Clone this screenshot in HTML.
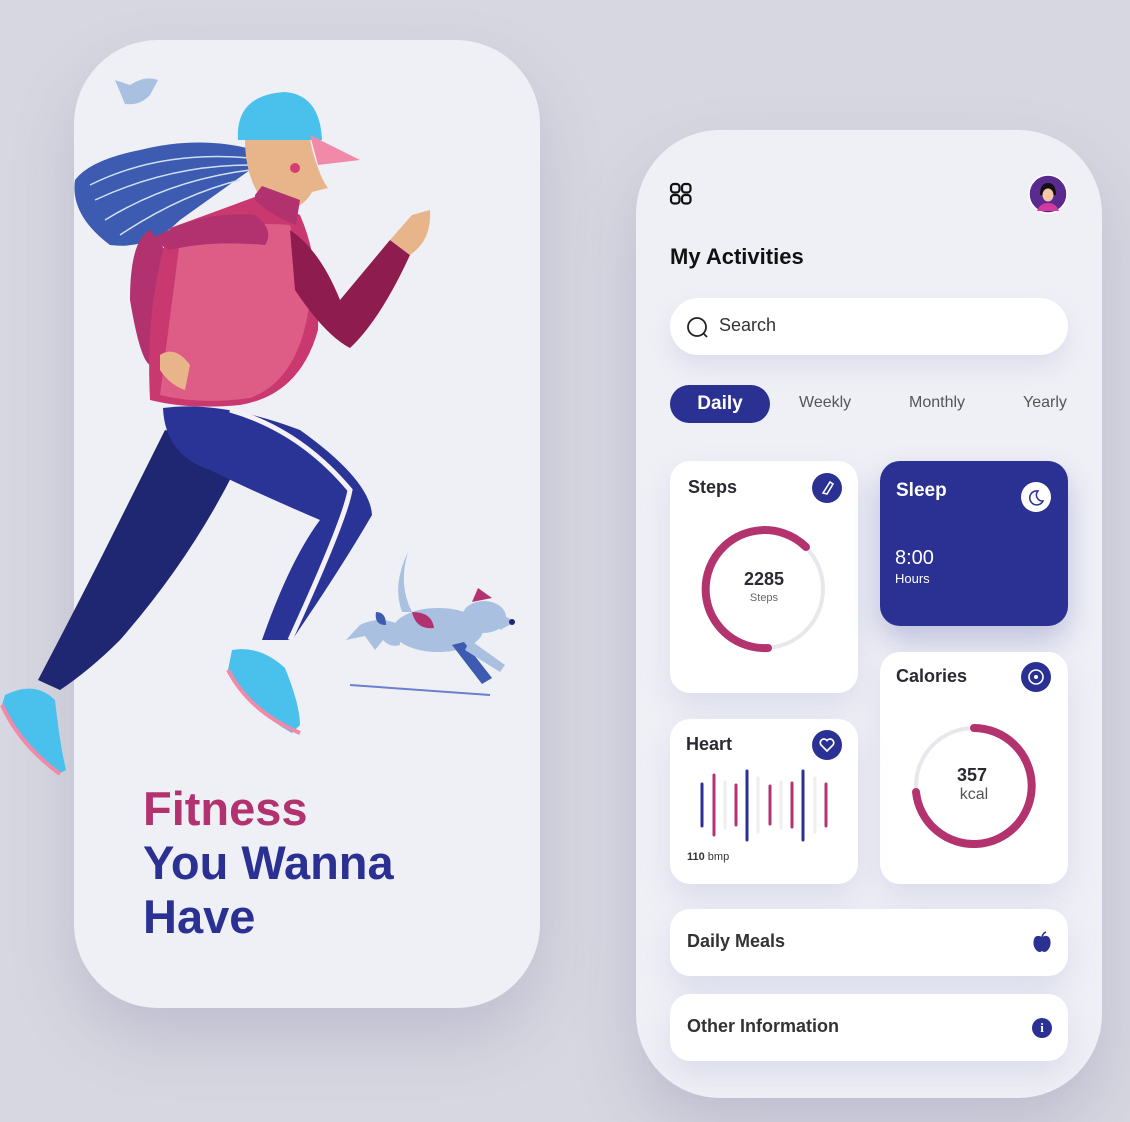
<!DOCTYPE html>
<html><head><meta charset="utf-8"><style>
*{margin:0;padding:0;box-sizing:border-box}
body{width:1130px;height:1122px;background:#d7d7e1;font-family:"Liberation Sans",sans-serif;position:relative;overflow:hidden}
.phone{position:absolute;width:466px;height:968px;border-radius:84px;background:#eff0f6;box-shadow:0 30px 60px rgba(120,120,160,.25)}
.abs{position:absolute}
.card{position:absolute;background:#fff;border-radius:20px;box-shadow:0 14px 30px rgba(150,150,200,.22)}
.t{font-weight:bold;color:#2a2a33}
.ic{position:absolute;width:30px;height:30px;border-radius:50%;background:#2a3192}
.big{position:absolute;left:143px;font-size:47px;font-weight:bold;line-height:54px}
</style></head><body>
<div class="phone" style="left:74px;top:40px"></div>
<div class="phone" style="left:636px;top:130px"></div>

<svg class="abs" style="left:0;top:0" width="560" height="800" viewBox="0 0 560 800">
<!-- bird -->
<path d="M115 80 L130 85 Q145 75 158 80 L150 95 Q140 106 125 104 L120 92 Z" fill="#a9c0e0"/>
<!-- hair -->
<path d="M255 150 Q200 135 140 150 Q90 160 75 180 Q70 215 110 245 Q150 250 180 220 Q215 195 250 170 Z" fill="#3d5bb0"/>
<path d="M90 185 Q160 150 250 158 M95 200 Q170 165 250 165 M105 220 Q170 180 250 170 M120 235 Q180 195 240 180" stroke="#cfe0f7" stroke-width="1.5" fill="none"/>
<!-- face -->
<path d="M245 140 L310 140 Q318 175 328 188 L312 192 Q305 205 290 210 L262 200 Q245 175 245 140Z" fill="#e8b58a"/>
<circle cx="295" cy="168" r="5" fill="#d83c73"/>
<!-- cap -->
<path d="M238 140 Q235 95 285 92 Q320 95 322 140 Z" fill="#4ac0ec"/>
<path d="M310 135 L360 160 L318 165 Z" fill="#f08aa8"/>
<!-- back arm -->
<path d="M150 230 Q130 240 130 300 Q140 360 150 365 L190 370 L185 330 L168 315 L165 250 Z" fill="#b1326f"/>
<!-- torso -->
<path d="M170 228 Q220 210 260 195 L300 215 Q320 260 318 330 Q300 395 240 405 Q190 410 150 400 Q145 300 170 228Z" fill="#c9396f"/>
<path d="M180 240 Q230 220 290 225 L310 300 Q300 380 250 398 Q200 405 160 395 Z" fill="#ee7b99" opacity=".55"/>
<path d="M255 195 L262 186 L300 200 L296 225 Q270 215 255 200Z" fill="#b1326f"/>
<!-- front arm -->
<path d="M290 230 Q320 250 340 300 L390 240 L410 255 Q380 320 350 348 Q325 335 295 290 Z" fill="#8e1c4e"/>
<path d="M390 240 L412 215 L430 210 Q432 240 410 255Z" fill="#e8b58a"/>
<path d="M150 240 Q200 210 255 215 Q275 230 265 245 Q210 240 170 250 Z" fill="#b1326f"/>
<path d="M160 355 Q175 345 190 365 L185 390 Q170 385 160 370Z" fill="#e8b58a"/>
<!-- back leg -->
<path d="M165 430 Q210 440 235 470 Q190 560 120 640 Q90 670 60 690 L38 680 Q80 600 110 540 Q140 480 165 430Z" fill="#1f2672"/>
<!-- front leg -->
<path d="M163 408 Q220 400 300 430 Q370 480 372 515 Q340 570 292 640 L262 640 Q290 560 320 520 Q250 490 210 470 Q165 455 163 408Z" fill="#2a3497"/>
<path d="M230 410 Q300 430 350 490 Q345 520 290 640" stroke="#f4f2f6" stroke-width="5" fill="none"/>
<!-- shoes -->
<path d="M232 650 Q260 645 285 668 Q300 705 300 725 L292 733 Q250 710 228 670Z" fill="#4ac0ec"/>
<path d="M228 670 Q250 712 300 733" stroke="#f08aa8" stroke-width="4" fill="none"/>
<path d="M5 695 Q35 680 55 700 Q60 745 66 770 L58 774 Q20 740 2 705Z" fill="#4ac0ec"/>
<path d="M2 705 Q20 745 60 774" stroke="#f08aa8" stroke-width="4" fill="none"/>
<!-- dog -->
<path d="M402 612 Q392 585 408 552 Q398 585 412 612Z" fill="#a9c0e0"/>
<path d="M400 625 Q380 615 360 625 L346 640 L365 636 L375 650 L383 640 Q390 648 400 645Z" fill="#a9c0e0"/>
<ellipse cx="438" cy="630" rx="45" ry="22" fill="#a9c0e0"/>
<ellipse cx="484" cy="617" rx="22" ry="16" fill="#a9c0e0"/>
<path d="M495 610 L515 622 L500 630Z" fill="#a9c0e0"/>
<circle cx="512" cy="622" r="3" fill="#1f2672"/>
<path d="M472 602 L478 588 L492 598Z" fill="#b1326f"/>
<path d="M376 612 Q386 612 386 625 Q374 625 376 612Z" fill="#3d5bb0"/>
<path d="M412 612 Q432 612 434 628 Q416 630 412 612Z" fill="#b1326f"/>
<path d="M452 645 L482 684 L492 678 L464 642Z" fill="#3d5bb0"/>
<path d="M470 640 L505 665 L500 672 L465 650Z" fill="#a9c0e0"/>
<path d="M350 685 L490 695" stroke="#6a7fcf" stroke-width="2" fill="none"/>
</svg>

<div class="big" style="top:782px;color:#b1326f">Fitness</div>
<div class="big" style="top:836px;color:#2a3192">You Wanna</div>
<div class="big" style="top:890px;color:#2a3192">Have</div>

<svg class="abs" style="left:669px;top:182px" width="26" height="24"><g fill="none" stroke="#111" stroke-width="2.2"><rect x="2" y="2" width="8.5" height="8.5" rx="3"/><rect x="13" y="2" width="8.5" height="8.5" rx="3"/><rect x="2" y="13" width="8.5" height="8.5" rx="3"/><rect x="13" y="13" width="8.5" height="8.5" rx="3"/></g></svg>
<svg class="abs" style="left:1028px;top:173px" width="40" height="42"><circle cx="20" cy="21" r="19" fill="#5a2a8e" stroke="#fff" stroke-width="1.5"/><path d="M12 22 Q12 10 20 10 Q28 10 28 22 Z" fill="#111"/><ellipse cx="20" cy="22" rx="5.5" ry="6.5" fill="#f5c6a8"/><path d="M9 38 Q12 30 20 30 Q28 30 31 38Z" fill="#d33aa0"/></svg>
<div class="abs t" style="left:670px;top:244px;font-size:22px;color:#111">My Activities</div>
<div class="abs" style="left:670px;top:298px;width:398px;height:57px;border-radius:29px;background:#fff;box-shadow:0 12px 24px rgba(150,150,200,.2)"></div>
<svg class="abs" style="left:686px;top:316px" width="24" height="24"><circle cx="11" cy="11" r="9" fill="none" stroke="#222" stroke-width="1.8"/><path d="M17 17 L21 21" stroke="#222" stroke-width="1.8"/></svg>
<div class="abs" style="left:719px;top:315px;font-size:18px;color:#333">Search</div>
<div class="abs" style="left:670px;top:385px;width:100px;height:38px;border-radius:19px;background:#2a3192;color:#fff;font-weight:bold;font-size:19px;text-align:center;line-height:38px">Daily</div>
<div class="abs" style="left:799px;top:394px;font-size:16px;color:#555">Weekly</div>
<div class="abs" style="left:909px;top:394px;font-size:16px;color:#555">Monthly</div>
<div class="abs" style="left:1023px;top:394px;font-size:16px;color:#555">Yearly</div>

<div class="card" style="left:670px;top:461px;width:188px;height:232px"></div>
<div class="abs t" style="left:688px;top:477px;font-size:18px">Steps</div>
<div class="ic" style="left:812px;top:473px"><svg width="30" height="30"><path d="M11 20 L18 9 L21 11 L15 21 Z" fill="none" stroke="#fff" stroke-width="1.6"/></svg></div>
<svg class="abs" style="left:694px;top:519px" width="140" height="140"><circle cx="70" cy="70" r="59" fill="none" stroke="#e8e8ec" stroke-width="4"/><path d="M112 28 A59 59 0 1 0 74 129" fill="none" stroke="#b3336f" stroke-width="8" stroke-linecap="round"/></svg>
<div class="abs t" style="left:714px;top:569px;width:100px;text-align:center;font-size:18px">2285</div>
<div class="abs" style="left:714px;top:592px;width:100px;text-align:center;font-size:11px;color:#666">Steps</div>

<div class="abs" style="left:880px;top:461px;width:188px;height:165px;border-radius:20px;background:#2a3192;box-shadow:0 14px 30px rgba(42,49,146,.25)"></div>
<div class="abs" style="left:896px;top:480px;font-size:19px;font-weight:bold;color:#fff">Sleep</div>
<div class="abs" style="left:1021px;top:482px;width:30px;height:30px;border-radius:50%;background:#fff"><svg width="30" height="30"><path d="M17 9 A7 7 0 1 0 22 19 A6 6 0 0 1 17 9Z" fill="none" stroke="#2a3192" stroke-width="1.5"/></svg></div>
<div class="abs" style="left:895px;top:547px;font-size:20px;color:#fff">8:00</div>
<div class="abs" style="left:895px;top:571px;font-size:13px;color:#fff">Hours</div>

<div class="card" style="left:880px;top:652px;width:188px;height:232px"></div>
<div class="abs t" style="left:896px;top:666px;font-size:18px">Calories</div>
<div class="ic" style="left:1021px;top:662px"><svg width="30" height="30"><circle cx="15" cy="15" r="7" fill="none" stroke="#fff" stroke-width="1.6"/><circle cx="15" cy="15" r="2" fill="#fff"/></svg></div>
<svg class="abs" style="left:904px;top:716px" width="140" height="140"><circle cx="70" cy="70" r="58" fill="none" stroke="#e8e8ec" stroke-width="4"/><path d="M70 12 A58 58 0 1 1 12 76" fill="none" stroke="#b3336f" stroke-width="8" stroke-linecap="round"/></svg>
<div class="abs t" style="left:922px;top:765px;width:100px;text-align:center;font-size:18px">357</div>
<div class="abs" style="left:924px;top:786px;width:100px;text-align:center;font-size:16px;color:#555">kcal</div>

<div class="card" style="left:670px;top:719px;width:188px;height:165px"></div>
<div class="abs t" style="left:686px;top:734px;font-size:18px">Heart</div>
<div class="ic" style="left:812px;top:730px"><svg width="30" height="30"><path d="M15 21 L9 15 A3.5 3.5 0 0 1 15 10.5 A3.5 3.5 0 0 1 21 15 Z" fill="none" stroke="#fff" stroke-width="1.7"/></svg></div>
<svg class="abs" style="left:690px;top:760px" width="150" height="90"><g stroke-width="3" stroke-linecap="round">
<line x1="12" y1="24" x2="12" y2="66" stroke="#2a3192"/><line x1="24" y1="15" x2="24" y2="75" stroke="#b3336f"/><line x1="35" y1="22" x2="35" y2="68" stroke="#eee"/><line x1="46" y1="25" x2="46" y2="65" stroke="#b3336f"/><line x1="57" y1="11" x2="57" y2="80" stroke="#2a3192"/><line x1="68" y1="18" x2="68" y2="72" stroke="#eee"/><line x1="80" y1="26" x2="80" y2="64" stroke="#b3336f"/><line x1="91" y1="22" x2="91" y2="68" stroke="#eee"/><line x1="102" y1="23" x2="102" y2="67" stroke="#b3336f"/><line x1="113" y1="11" x2="113" y2="80" stroke="#2a3192"/><line x1="125" y1="18" x2="125" y2="72" stroke="#eee"/><line x1="136" y1="24" x2="136" y2="66" stroke="#b3336f"/></g></svg>
<div class="abs" style="left:687px;top:851px;font-size:11px;color:#333"><b>110</b> bmp</div>

<div class="card" style="left:670px;top:909px;width:398px;height:67px"></div>
<div class="abs t" style="left:687px;top:931px;font-size:18px;color:#333">Daily Meals</div>
<svg class="abs" style="left:1031px;top:930px" width="22" height="24"><path d="M11 7 Q5 4 3 9 Q1 16 6 21 Q9 23 11 21 Q13 23 16 21 Q21 16 19 9 Q17 4 11 7Z" fill="#2a3192"/><path d="M11 7 Q12 3 15 2" stroke="#2a3192" stroke-width="1.5" fill="none"/></svg>
<div class="card" style="left:670px;top:994px;width:398px;height:67px"></div>
<div class="abs t" style="left:687px;top:1016px;font-size:18px;color:#333">Other Information</div>
<div class="abs" style="left:1032px;top:1018px;width:20px;height:20px;border-radius:50%;background:#2a3192;color:#fff;font-size:13px;font-weight:bold;text-align:center;line-height:20px;font-family:'Liberation Serif',serif">i</div>
</body></html>
